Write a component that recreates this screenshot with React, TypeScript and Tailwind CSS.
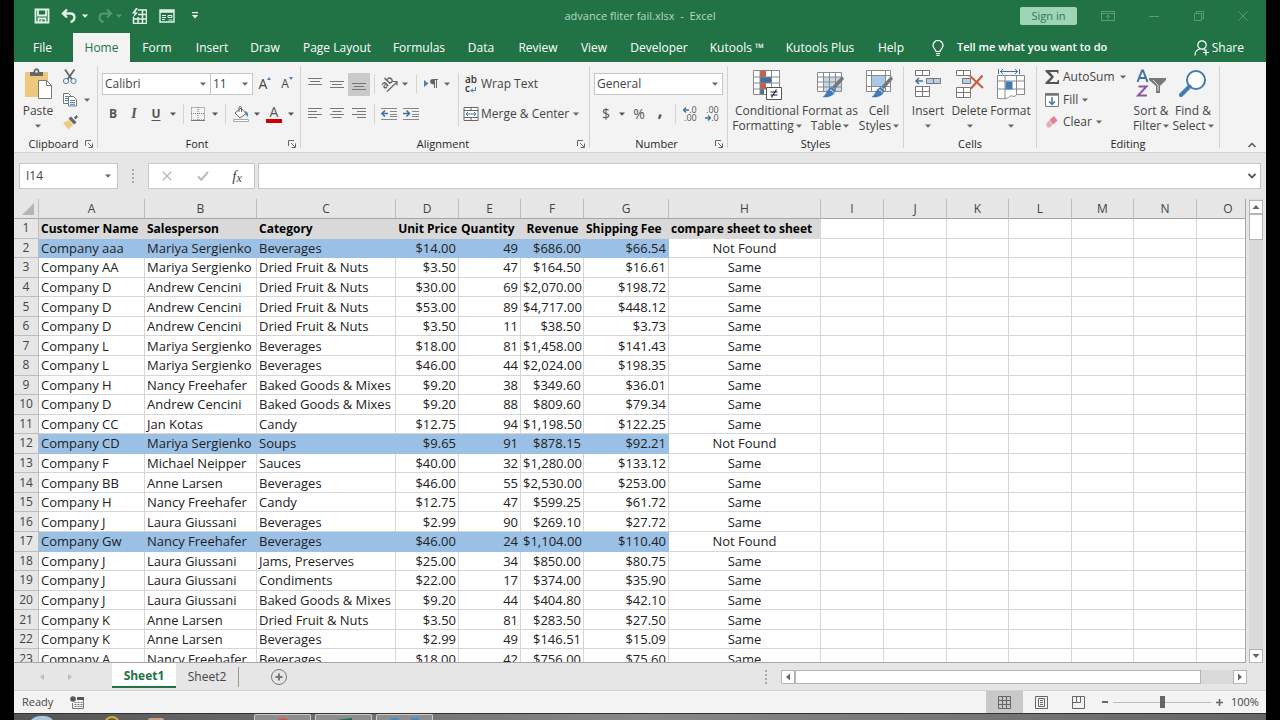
import React from 'react';
import { clsx } from 'clsx';

type RowData = [string, string, string, string, string, string, string, string];

const columns = [
  { id: 'A', width: 'w-[106px]' },
  { id: 'B', width: 'w-[112px]' },
  { id: 'C', width: 'w-[139px]' },
  { id: 'D', width: 'w-[63px]' },
  { id: 'E', width: 'w-[62px]' },
  { id: 'F', width: 'w-[63px]' },
  { id: 'G', width: 'w-[85px]' },
  { id: 'H', width: 'w-[152px]' },
  { id: 'I', width: 'w-[63px]' },
  { id: 'J', width: 'w-[63px]' },
  { id: 'K', width: 'w-[62px]' },
  { id: 'L', width: 'w-[63px]' },
  { id: 'M', width: 'w-[62px]' },
  { id: 'N', width: 'w-[63px]' },
  { id: 'O', width: 'w-[63px]' },
];

const headings = [
  { text: 'Customer Name', align: 'text-left' },
  { text: 'Salesperson', align: 'text-left' },
  { text: 'Category', align: 'text-left' },
  { text: 'Unit Price', align: 'text-right' },
  { text: 'Quantity', align: 'text-left' },
  { text: 'Revenue', align: 'text-center' },
  { text: 'Shipping Fee', align: 'text-left' },
  { text: 'compare sheet to sheet', align: 'text-left' },
];

const rows: RowData[] = [
  ['Company aaa', 'Mariya Sergienko', 'Beverages', '$14.00', '49', '$686.00', '$66.54', 'Not Found'],
  ['Company AA', 'Mariya Sergienko', 'Dried Fruit & Nuts', '$3.50', '47', '$164.50', '$16.61', 'Same'],
  ['Company D', 'Andrew Cencini', 'Dried Fruit & Nuts', '$30.00', '69', '$2,070.00', '$198.72', 'Same'],
  ['Company D', 'Andrew Cencini', 'Dried Fruit & Nuts', '$53.00', '89', '$4,717.00', '$448.12', 'Same'],
  ['Company D', 'Andrew Cencini', 'Dried Fruit & Nuts', '$3.50', '11', '$38.50', '$3.73', 'Same'],
  ['Company L', 'Mariya Sergienko', 'Beverages', '$18.00', '81', '$1,458.00', '$141.43', 'Same'],
  ['Company L', 'Mariya Sergienko', 'Beverages', '$46.00', '44', '$2,024.00', '$198.35', 'Same'],
  ['Company H', 'Nancy Freehafer', 'Baked Goods & Mixes', '$9.20', '38', '$349.60', '$36.01', 'Same'],
  ['Company D', 'Andrew Cencini', 'Baked Goods & Mixes', '$9.20', '88', '$809.60', '$79.34', 'Same'],
  ['Company CC', 'Jan Kotas', 'Candy', '$12.75', '94', '$1,198.50', '$122.25', 'Same'],
  ['Company CD', 'Mariya Sergienko', 'Soups', '$9.65', '91', '$878.15', '$92.21', 'Not Found'],
  ['Company F', 'Michael Neipper', 'Sauces', '$40.00', '32', '$1,280.00', '$133.12', 'Same'],
  ['Company BB', 'Anne Larsen', 'Beverages', '$46.00', '55', '$2,530.00', '$253.00', 'Same'],
  ['Company H', 'Nancy Freehafer', 'Candy', '$12.75', '47', '$599.25', '$61.72', 'Same'],
  ['Company J', 'Laura Giussani', 'Beverages', '$2.99', '90', '$269.10', '$27.72', 'Same'],
  ['Company Gw', 'Nancy Freehafer', 'Beverages', '$46.00', '24', '$1,104.00', '$110.40', 'Not Found'],
  ['Company J', 'Laura Giussani', 'Jams, Preserves', '$25.00', '34', '$850.00', '$80.75', 'Same'],
  ['Company J', 'Laura Giussani', 'Condiments', '$22.00', '17', '$374.00', '$35.90', 'Same'],
  ['Company J', 'Laura Giussani', 'Baked Goods & Mixes', '$9.20', '44', '$404.80', '$42.10', 'Same'],
  ['Company K', 'Anne Larsen', 'Dried Fruit & Nuts', '$3.50', '81', '$283.50', '$27.50', 'Same'],
  ['Company K', 'Anne Larsen', 'Beverages', '$2.99', '49', '$146.51', '$15.09', 'Same'],
  ['Company A', 'Nancy Freehafer', 'Beverages', '$18.00', '42', '$756.00', '$75.60', 'Same'],
];

const menuTabs = [
  { name: 'Form', width: 'w-[54px]' },
  { name: 'Insert', width: 'w-[56px]' },
  { name: 'Draw', width: 'w-[50px]' },
  { name: 'Page Layout', width: 'w-[94px]' },
  { name: 'Formulas', width: 'w-[70px]' },
  { name: 'Data', width: 'w-[54px]' },
  { name: 'Review', width: 'w-[60px]' },
  { name: 'View', width: 'w-[52px]' },
  { name: 'Developer', width: 'w-[78px]' },
  { name: 'Kutools ™', width: 'w-[78px]' },
  { name: 'Kutools Plus', width: 'w-[88px]' },
  { name: 'Help', width: 'w-[54px]' },
];

const Arrow: React.FC<{ className?: string }> = ({ className }) => (
  <svg viewBox="0 0 6 4" className={clsx('h-1 w-1.5 shrink-0 fill-current', className)} aria-hidden="true">
    <path d="M0 0.5h6L3 3.7z" />
  </svg>
);

const Sep: React.FC<{ className?: string }> = ({ className }) => (
  <span className={clsx('flex shrink-0 justify-center', className)}>
    <span className="h-5 w-px bg-[#d4d4d4]" />
  </span>
);

interface ToolProps {
  label: string;
  className?: string;
  children: React.ReactNode;
}

const Tool: React.FC<ToolProps> = ({ label, className, children }) => (
  <button type="button" aria-label={label} className={clsx('flex shrink-0 items-center justify-center', className)}>
    {children}
  </button>
);

interface GroupProps {
  name: string;
  width: string;
  launcher?: boolean;
  children: React.ReactNode;
}

const Group: React.FC<GroupProps> = ({ name, width, launcher, children }) => (
  <section aria-label={name} className={clsx('flex shrink-0 pt-1', width)}>
    <div className="flex min-w-0 flex-1 flex-col">
      <div className="flex-1">{children}</div>
      <div className="flex h-4 items-center">
        <span className={clsx('flex-1 text-center text-[11px] leading-4 text-[#262626]', launcher && 'pl-2')}>{name}</span>
        {launcher && (
          <Tool label={`${name} settings`} className="mr-1 w-2">
            <svg viewBox="0 0 8 8" className="size-2 fill-none stroke-[#666]">
              <path d="M0.5 6V0.5H6M3 3l4 4M7.5 3.5v4h-4" />
            </svg>
          </Tool>
        )}
      </div>
    </div>
    <span className="mb-1 w-px bg-[#d2d2d2]" />
  </section>
);

const BigTool: React.FC<{ lines: string[]; width: string; children: React.ReactNode }> = ({ lines, width, children }) => (
  <button type="button" className={clsx('flex shrink-0 flex-col items-center text-xs leading-[15px] text-[#444]', width)}>
    <span className="mb-[3px] flex h-8 items-center justify-center">{children}</span>
    <span className="whitespace-nowrap">{lines[0]}</span>
    <span className="flex h-[15px] items-center gap-0.5 whitespace-nowrap">
      {lines[1]}
      <Arrow className="text-[#666]" />
    </span>
  </button>
);

const Lines: React.FC<{ d: string }> = ({ d }) => (
  <svg viewBox="0 0 14 14" className="size-3.5 fill-none stroke-[#777]">
    <path d={d} />
  </svg>
);

const TitleBar = () => (
  <header className="grid h-8 shrink-0 grid-cols-[1fr_auto_1fr] items-center text-white">
    <div className="flex items-center pl-3.5">
      <Tool label="Save" className="w-7">
        <svg viewBox="0 0 16 16" className="size-4 fill-none stroke-[#e4f2ea]" strokeWidth="1.800">
          <path d="M1.500 1.500h13v13h-13z" />
          <path d="M4 2v5.500h8V2M4.500 14.500v-4h7v4M7.500 12v2.500" />
        </svg>
      </Tool>
      <Tool label="Undo" className="w-[26px]">
        <svg viewBox="0 0 16 16" className="size-4 fill-none stroke-[#e4f2ea]" strokeWidth="2.400">
          <path d="M6 1.500L2 5.500l4 4M2.500 5.500H9.500c5 0 5.500 7 0 8.500" />
        </svg>
      </Tool>
      <Arrow />
      <Tool label="Redo" className="ml-1.5 w-[22px] opacity-25">
        <svg viewBox="0 0 16 16" className="size-4 fill-none stroke-white" strokeWidth="2">
          <path d="M10 1.500l4 4-4 4M13.500 5.500H6.500c-5 0-5.500 7 0 8.500" />
        </svg>
      </Tool>
      <Arrow className="opacity-25" />
      <Tool label="Quick table" className="w-[34px]">
        <svg viewBox="0 0 16 16" className="size-4 fill-none stroke-[#e4f2ea]">
          <path d="M7 2h8.500v13.500h-13V9M7 6.500h8.500M2.500 11h13M7 9v6.500M11.500 2v13.500" strokeWidth="1.500" />
          <path d="M5 0L1 5.500h3L1.500 10 7 4.500H4L7 0z" className="fill-white stroke-none" />
        </svg>
      </Tool>
      <Tool label="Form" className="w-[22px]">
        <svg viewBox="0 0 16 16" className="size-4 fill-none stroke-[#e4f2ea]">
          <path d="M1 2h14v12H1z" strokeWidth="1.400" />
          <path d="M1 3.500h14" strokeWidth="2.500" />
          <path d="M3 7.500h4M3 9.500h4M3 11.500h3M9 7.500h4v2H9zM9.500 12h4" />
        </svg>
      </Tool>
      <Tool label="Customize toolbar" className="w-[34px]">
        <svg viewBox="0 0 6 8" className="h-2 w-1.5 fill-white">
          <path d="M0 0h6v1.200H0zM0 3h6L3 6.500z" />
        </svg>
      </Tool>
    </div>
    <h1 className="text-[11px] text-[#b9d6c6]">advance fliter fail.xlsx&nbsp; -&nbsp; Excel</h1>
    <div className="flex items-center justify-end pr-px text-[#5d9b78]">
      <button type="button" className="mr-2 h-[18px] w-[57px] rounded-xs bg-[#9fd5b7] text-[11px] leading-4 text-[#2b7a50]">
        Sign in
      </button>
      <Tool label="Ribbon options" className="w-[46px]">
        <svg viewBox="0 0 14 12" className="h-3 w-3.5 fill-none stroke-current">
          <path d="M0.500 1.500h13v9H0.500zM0.500 3.500h13M7 9.500v-4M5 7l2-2 2 2" />
        </svg>
      </Tool>
      <Tool label="Minimize" className="w-[46px]">
        <span className="h-px w-2.5 bg-current" />
      </Tool>
      <Tool label="Restore" className="w-11">
        <svg viewBox="0 0 10 10" className="size-2.5 fill-none stroke-current">
          <path d="M0.500 2.500h7v7h-7zM2.500 2.500v-2h7v7h-2" />
        </svg>
      </Tool>
      <Tool label="Close" className="w-11">
        <svg viewBox="0 0 10 10" className="size-2.5 fill-none stroke-current">
          <path d="M0.500 0.500l9 9M9.500 0.500l-9 9" />
        </svg>
      </Tool>
    </div>
  </header>
);

const MenuBar = () => (
  <nav className="flex h-[30px] shrink-0 items-stretch pt-px text-xs whitespace-nowrap text-white">
    <button type="button" className="w-[57px]">File</button>
    <button type="button" className="ml-0.5 w-[57px] bg-[#f3f3f3] text-[#217346]">Home</button>
    {menuTabs.map((tab) => (
      <button key={tab.name} type="button" className={clsx('shrink-0', tab.width)}>
        {tab.name}
      </button>
    ))}
    <button type="button" className="ml-3.5 flex items-center gap-[13px] text-[11px] font-semibold">
      <svg viewBox="0 0 12 16" className="h-4 w-3 fill-none stroke-white" strokeWidth="1.200">
        <path d="M4 11.500c0-2-3-3-3-6a5 5 0 0 1 10 0c0 3-3 4-3 6zM4 13.500h4M4.500 15.300h3" />
      </svg>
      Tell me what you want to do
    </button>
    <button type="button" className="mr-[22px] ml-auto flex items-center gap-0.5">
      <svg viewBox="0 0 16 16" className="size-4 fill-none stroke-white" strokeWidth="1.200">
        <circle cx="8" cy="5" r="4.200" />
        <path d="M1 15.500c0-4 2-6 5-6.500M9.500 9l2 1.500M12 9.500v6M9 12.500h6" />
      </svg>
      Share
    </button>
  </nav>
);

const ClipboardGroup = () => (
  <Group name="Clipboard" width="w-[84px]" launcher>
    <div className="flex">
      <button type="button" className="ml-1.5 flex w-9 flex-col items-center pt-0.5 text-xs leading-[15px] text-[#444]">
        <svg viewBox="0 0 28 32" className="mb-[3px] h-8 w-7">
          <path d="M1 4h23v25H1z" fill="#edc87e" />
          <path d="M6 4h3.500c0-5 6-5 6 0H19v4H6z" fill="#666" />
          <circle cx="12.500" cy="3.500" r="1.200" fill="#f3f3f3" />
          <path d="M14.500 12.500h8l5 5v13h-13z" fill="#fff" stroke="#777" />
          <path d="M22.500 12.500v5h5" fill="none" stroke="#777" />
        </svg>
        Paste
        <Arrow className="mt-1.5 text-[#666]" />
      </button>
      <div className="ml-1 flex flex-col">
        <Tool label="Cut" className="h-[22px] w-5">
          <svg viewBox="0 0 16 16" className="size-4 fill-none">
            <path d="M3 0.500l7 10M12.500 0.500l-7 10" stroke="#666" strokeWidth="1.800" />
            <circle cx="4" cy="12" r="2.600" stroke="#4f7fb0" />
            <circle cx="11.500" cy="12" r="2.600" stroke="#4f7fb0" />
          </svg>
        </Tool>
        <div className="flex items-center">
          <Tool label="Copy" className="h-[23px] w-5">
            <svg viewBox="0 0 16 16" className="size-4 fill-white stroke-[#777]">
              <path d="M1.500 1.500h5l3 3v7h-8z" />
              <path d="M3 4.500h3M3 6.500h3M3 8.500h3" stroke="#4f7fb0" />
              <path d="M6.500 4.500h5l3 3v6.500h-8z" />
              <path d="M8 8.500h5M8 10.500h5M8 12.300h5" stroke="#4f7fb0" />
            </svg>
          </Tool>
          <Arrow className="ml-1 text-[#666]" />
        </div>
        <Tool label="Format painter" className="h-[21px] w-5">
          <svg viewBox="0 0 16 16" className="size-4">
            <path d="M1 9l6-3 4 5-4.500 4.500z" fill="#edc87e" />
            <path d="M6.500 4.500L9 2.500l5.500 6L12 10.500zM12 3.500L14.500 1 16 3l-2.500 2.500z" fill="#666" />
          </svg>
        </Tool>
      </div>
    </div>
  </Group>
);

const FontGroup = () => (
  <Group name="Font" width="w-[203px]" launcher>
    <div className="mt-[7px] flex h-[22px] w-[200px] items-center pl-1 text-xs text-[#444]">
      <div className="flex h-[22px] w-[109px] items-center border border-[#c6c6c6] bg-white pr-1">
        <select aria-label="Font" defaultValue="Calibri" className="min-w-0 flex-1 appearance-none pl-0.5">
          <option>Calibri</option>
        </select>
        <Arrow className="pointer-events-none text-[#666]" />
      </div>
      <div className="-ml-px flex h-[22px] w-[43px] items-center border border-[#c6c6c6] bg-white pr-1">
        <select aria-label="Font size" defaultValue="11" className="min-w-0 flex-1 appearance-none pl-0.5">
          <option>11</option>
        </select>
        <Arrow className="pointer-events-none text-[#666]" />
      </div>
      <Tool label="Increase font size" className="w-6 text-sm">
        A
        <svg viewBox="0 0 4 3" className="mb-3 h-[3px] w-1 fill-[#4f7fb0]"><path d="M0 3h4L2 0z" /></svg>
      </Tool>
      <Tool label="Decrease font size" className="w-5 text-xs">
        A
        <svg viewBox="0 0 4 3" className="mb-3 h-[3px] w-1 fill-[#4f7fb0]"><path d="M0 0h4L2 3z" /></svg>
      </Tool>
    </div>
    <div className="mt-2 flex h-[22px] items-center pl-1 text-xs text-[#555]">
      <Tool label="Bold" className="w-[22px] font-bold">B</Tool>
      <Tool label="Italic" className="w-5 font-['Liberation_Serif',serif] text-sm font-bold italic">I</Tool>
      <Tool label="Underline" className="w-6 font-bold underline underline-offset-2">U</Tool>
      <Arrow className="mx-0.5" />
      <Sep className="w-2.5" />
      <Tool label="Borders" className="w-5">
        <svg viewBox="0 0 14 14" className="size-3.5 fill-none stroke-[#777]">
          <path d="M0.500 0.500h13v12.500H0.500zM7 0v13M0 6.500h14" strokeDasharray="1 1" />
          <path d="M0 13.500h14" />
        </svg>
      </Tool>
      <Arrow className="mx-1" />
      <Sep className="w-1.5" />
      <Tool label="Fill color" className="w-[26px]">
        <svg viewBox="0 0 16 16" className="size-4 fill-none stroke-[#666]">
          <path d="M2 7l6-5 5 5.500L7 12z" fill="#fff" />
          <path d="M6 6V1.500c0-1.500 2.500-1.500 2.500 0V6" />
          <path d="M12 5c3 1 3.500 3 2.500 6-1-1-2-3-2.500-6z" fill="#4f7fb0" stroke="none" />
          <path d="M0.500 13.500h15v2H0.500z" fill="#fff" stroke="#aaa" />
        </svg>
      </Tool>
      <Arrow />
      <Tool label="Font color" className="w-7 flex-col">
        <span className="text-sm leading-3">A</span>
        <span className="mt-px h-1 w-4 bg-[#d00000]" />
      </Tool>
      <Arrow />
    </div>
  </Group>
);

const AlignmentGroup = () => (
  <Group name="Alignment" width="w-[289px]" launcher>
    <div className="flex pt-[7px]">
      <div className="flex flex-col gap-2 pl-[3px] text-[#666]">
        <div className="flex h-[22px] items-center">
          <Tool label="Top align" className="h-[22px] w-[22px]"><Lines d="M0 1.500h14M2 4.500h10M0 7.500h14" /></Tool>
          <Tool label="Middle align" className="h-[22px] w-[22px]"><Lines d="M0 4.500h14M2 7.500h10M0 10.500h14" /></Tool>
          <Tool label="Bottom align" className="h-[23px] w-[22px] bg-[#cacaca]"><Lines d="M0 6.500h14M2 9.500h10M0 12.500h14" /></Tool>
          <Sep className="w-2" />
          <Tool label="Orientation" className="w-[22px]">
            <span className="-mr-2 mb-1 -rotate-45 text-[11px] leading-[14px] font-semibold text-[#555]">ab</span>
            <svg viewBox="0 0 12 12" className="mt-1 size-3 fill-none stroke-[#666]" strokeWidth="1.200">
              <path d="M1 11.500L11 2M7 1.500h4v4" />
            </svg>
          </Tool>
          <Arrow className="mx-0.5" />
          <Sep className="w-3" />
          <Tool label="Text direction" className="w-[18px]">
            <svg viewBox="0 0 14 12" className="h-3 w-3.5 fill-[#666]">
              <path d="M0 2l4.500 3.500L0 9z" fill="#4f7fb0" />
              <path d="M9 1h5v1h-1v8h-1V2h-1v8h-1V6.500C5 6.500 5 1 9 1z" />
            </svg>
          </Tool>
          <Arrow className="mx-1" />
        </div>
        <div className="flex h-[22px] items-center">
          <Tool label="Align left" className="w-[22px]"><Lines d="M0 1.500h14M0 4.500h9M0 7.500h14M0 10.500h9" /></Tool>
          <Tool label="Center" className="w-[22px]"><Lines d="M0 1.500h14M2.500 4.500h9M0 7.500h14M2.500 10.500h9" /></Tool>
          <Tool label="Align right" className="w-[22px]"><Lines d="M0 1.500h14M5 4.500h9M0 7.500h14M5 10.500h9" /></Tool>
          <Sep className="w-2" />
          <Tool label="Decrease indent" className="w-[22px]">
            <svg viewBox="0 0 16 14" className="h-3.5 w-4 fill-none stroke-[#888]">
              <path d="M0 1.500h16M9 4.500h7M9 7.500h7M9 9.500h7M0 12.500h16" />
              <path d="M1 6.500h6M4 3.500l-3 3 3 3" stroke="#3f74a8" strokeWidth="1.600" />
            </svg>
          </Tool>
          <Tool label="Increase indent" className="w-[22px]">
            <svg viewBox="0 0 16 14" className="h-3.5 w-4 fill-none stroke-[#888]">
              <path d="M0 1.500h16M9 4.500h7M9 7.500h7M9 9.500h7M0 12.500h16" />
              <path d="M0 6.500h6M3.500 3.500l3 3-3 3" stroke="#3f74a8" strokeWidth="1.600" />
            </svg>
          </Tool>
        </div>
      </div>
      <span className="mx-1 h-[53px] w-px bg-[#d4d4d4]" />
      <div className="flex flex-col gap-2 text-xs text-[#444]">
        <button type="button" className="flex h-[22px] items-center gap-0.5">
          <span className="flex w-4 flex-col pl-0.5 text-left text-[10px] leading-[9px] font-semibold text-[#333]">
            <span>ab</span>
            <span className="flex items-end">
              c
              <svg viewBox="0 0 6 6" className="size-1.5 fill-none stroke-[#3f74a8]">
                <path d="M5.500 0v3.500H1M3 1.500l-2 2 2 2" />
              </svg>
            </span>
          </span>
          Wrap Text
        </button>
        <button type="button" className="flex h-[22px] items-center gap-0.5 whitespace-nowrap">
          <svg viewBox="0 0 16 16" className="size-4 fill-white stroke-[#666]">
            <path d="M1 1.500h14v13H1zM1 4.500h14M1 11.500h14M8 1.500v3M8 11.500v3" />
            <path d="M3 8h10M5 6L3 8l2 2M11 6l2 2-2 2" stroke="#3f74a8" fill="none" />
          </svg>
          Merge &amp; Center
          <Arrow className="ml-0.5 text-[#666]" />
        </button>
      </div>
    </div>
  </Group>
);

const DecimalIcon: React.FC<{ top: string; bottom: string; left?: boolean }> = ({ top, bottom, left }) => {
  const arrow = (
    <svg viewBox="0 0 6 6" className="size-1.5 fill-none stroke-[#3f74a8]" strokeWidth="1.400">
      <path d={left ? 'M0.500 3H6M3 0.500L0.500 3 3 5.500' : 'M0 3h5.500M3 0.500L5.500 3 3 5.500'} />
    </svg>
  );
  return (
    <span className="flex flex-col items-end text-[9px] leading-2 text-[#555]">
      <span className="flex h-2 items-center">{left && arrow}{top}</span>
      <span className="flex h-2 items-center">{!left && arrow}{bottom}</span>
    </span>
  );
};

const NumberGroup = () => (
  <Group name="Number" width="w-[138px]" launcher>
    <div className="mt-[7px] ml-1 flex h-[22px] w-[129px] items-center border border-[#c6c6c6] bg-white pr-1 text-xs text-[#444]">
      <select aria-label="Number format" defaultValue="General" className="min-w-0 flex-1 appearance-none pl-0.5">
        <option>General</option>
      </select>
      <Arrow className="pointer-events-none text-[#666]" />
    </div>
    <div className="mt-2 flex h-[22px] items-center pl-1.5 text-sm text-[#555]">
      <Tool label="Accounting format" className="w-5">$</Tool>
      <Arrow className="mx-[3px]" />
      <Tool label="Percent style" className="w-[22px]">%</Tool>
      <Tool label="Comma style" className="h-[22px] w-5 pb-2 text-lg font-bold">,</Tool>
      <Sep className="w-2.5" />
      <Tool label="Increase decimal" className="w-5"><DecimalIcon top=".0" bottom=".00" left /></Tool>
      <Tool label="Decrease decimal" className="w-6"><DecimalIcon top=".00" bottom=".0" /></Tool>
    </div>
  </Group>
);

const Brush = () => (
  <>
    <path d="M28 8l2 3-9 10-3-2z" fill="#777" />
    <path d="M17.500 19l4 3c-1 6-7 8-13 7 4-2 4-8 9-10z" fill="#3f7cb3" />
    <path d="M16 22c2 0 3 1 3 2.500" fill="none" stroke="#fff" />
  </>
);

const StylesGroup = () => (
  <Group name="Styles" width="w-[176px]">
    <div className="flex pt-0.5 pl-1">
      <BigTool lines={['Conditional', 'Formatting']} width="w-[70px]">
        <svg viewBox="0 0 32 32" className="size-8 fill-none">
          <path d="M2.500 2.500h26v24h-26z" fill="#fff" />
          <path d="M9 3h6v6H9zM9 15h6v6H9z" fill="#cc5b45" />
          <path d="M9 9h11v6H9zM9 21h4v6H9z" fill="#44709f" />
          <path d="M2.500 2.500h26v24h-26zM2.500 9h26M2.500 15h26M2.500 21h26M9 2.500v24M20.500 2.500v24" stroke="#888" />
          <path d="M15.500 19.500h15v12h-15z" fill="#fff" stroke="#555" />
          <path d="M19.500 24h7M19.500 27h7M25.500 21.500l-5 8" stroke="#222" strokeWidth="1.200" />
        </svg>
      </BigTool>
      <BigTool lines={['Format as', 'Table']} width="w-[56px]">
        <svg viewBox="0 0 32 32" className="size-8 fill-none">
          <path d="M3.500 4.500h24v19h-24z" fill="#fff" />
          <path d="M10 9h17v14H10z" fill="#c3d8eb" />
          <path d="M3.500 4.500h24v19h-24zM3.500 9h24M3.500 14h24M3.500 19h24M9.500 4.500v19M15.500 4.500v19M21.500 4.500v19" stroke="#8a8a8a" />
          <Brush />
        </svg>
      </BigTool>
      <BigTool lines={['Cell', 'Styles']} width="w-[42px]">
        <svg viewBox="0 0 32 32" className="size-8 fill-none">
          <path d="M3.500 2.500h24v21h-24z" fill="#fff" />
          <path d="M9 8h14v10H9z" fill="#a9c9e6" />
          <path d="M3.500 2.500h24v21h-24zM3.500 7.500h24M3.500 18.500h24M8.500 2.500v21M22.500 2.500v21" stroke="#8a8a8a" />
          <Brush />
        </svg>
      </BigTool>
    </div>
  </Group>
);

const CellsGroup = () => (
  <Group name="Cells" width="w-[133px]">
    <div className="flex pt-0.5 pl-[3px]">
      <BigTool lines={['Insert', '']} width="w-[42px]">
        <svg viewBox="0 0 28 32" className="h-8 w-7 fill-white stroke-[#777]">
          <path d="M1.500 2.500h14v5h-14zM8.500 2.500v5M1.500 18.500h14v10h-14zM1.500 23.500h14M8.500 18.500v10" />
          <path d="M12.500 10.500h14v5h-14zM19.500 10.500v5" fill="#b7d0e8" />
          <path d="M2 13h7M5 10l-3 3 3 3" fill="none" stroke="#3f74a8" strokeWidth="1.500" />
        </svg>
      </BigTool>
      <BigTool lines={['Delete', '']} width="w-[41px]">
        <svg viewBox="0 0 28 32" className="h-8 w-7 fill-white stroke-[#777]">
          <path d="M0.500 2.500h14v5h-14zM7.500 2.500v5M0.500 19.500h14v10h-14zM0.500 24.500h14M7.500 19.500v10" />
          <path d="M6.500 10.500h8v5h-8z" fill="#b7d0e8" />
          <path d="M14 8l13 12M26.500 7.500L15 20.500" stroke="#d0553a" strokeWidth="2" />
        </svg>
      </BigTool>
      <BigTool lines={['Format', '']} width="w-[41px]">
        <svg viewBox="0 0 28 32" className="h-8 w-7 fill-none stroke-[#888]">
          <path d="M0.500 7.500h27v19h-8c-2 4-5 0-7 2-2 3-8 2-12 2zM0.500 13h27M0.500 21h27M8 7.500v23M19.500 7.500v19" fill="#fff" />
          <path d="M8.500 13.500h7v8h-7z" fill="#3f7cb3" stroke="none" />
          <path d="M1.500 1v5M22.500 1v5M3 3.500h18M6 1L3.500 3.500 6 6M18 1l2.500 2.500L18 6" stroke="#3f74a8" />
        </svg>
      </BigTool>
    </div>
  </Group>
);

const EditingGroup = () => (
  <Group name="Editing" width="w-[183px]">
    <div className="flex pl-2">
      <div className="flex w-[85px] flex-col pr-1 text-xs text-[#444]">
        <button type="button" className="flex h-[22px] items-center gap-1">
          <svg viewBox="0 0 14 14" className="size-3.5 fill-[#555]">
            <path d="M0.500 0h13v3.500h-1L12 2H5l4 5-4.500 5H12l1-2h1v4H0.500v-1.500L6 7 0.500 1.500z" />
          </svg>
          AutoSum
          <Arrow className="ml-auto text-[#666]" />
        </button>
        <button type="button" className="flex h-[23px] items-center gap-1">
          <svg viewBox="0 0 14 14" className="size-3.5 fill-white stroke-[#777]">
            <path d="M0.500 0.500h13v13H0.500z" />
            <path d="M1 1.500h12" strokeWidth="2.500" />
            <path d="M7 4v7.500M4 8.500l3 3 3-3" stroke="#3f74a8" strokeWidth="1.500" fill="none" />
          </svg>
          Fill
          <Arrow className="text-[#666]" />
        </button>
        <button type="button" className="flex h-[22px] items-center gap-1">
          <svg viewBox="0 0 14 14" className="size-3.5">
            <path d="M9 1l3.500 4.500L8 9.500 4.500 5z" fill="#e07f92" />
            <path d="M4 5.500L7.500 10 5 12.500H2.500L1 9z" fill="#e9a9b5" />
          </svg>
          Clear
          <Arrow className="text-[#666]" />
        </button>
      </div>
      <div className="flex pt-0.5">
        <BigTool lines={['Sort &', 'Filter']} width="w-[42px]">
          <svg viewBox="0 0 30 32" className="h-8 w-[30px]">
            <path d="M1.500 14L6 2.500h1L11.500 14M3 10h7" fill="none" stroke="#3f74a8" strokeWidth="2" />
            <path d="M2.500 18.500h8L2 27.500h9" fill="none" stroke="#8a58a8" strokeWidth="2" />
            <path d="M13 10h17v2l-6 6v7h-4v-7l-7-6z" fill="#777" />
            <path d="M17 12l5 5v6" fill="none" stroke="#ddd" />
          </svg>
        </BigTool>
        <BigTool lines={['Find &', 'Select']} width="w-[42px]">
          <svg viewBox="0 0 28 32" className="h-8 w-7">
            <circle cx="17" cy="12" r="9" fill="#fff" stroke="#3f7cb3" strokeWidth="2" />
            <path d="M10.500 18.500L2 27" stroke="#3f7cb3" strokeWidth="4" strokeLinecap="round" />
          </svg>
        </BigTool>
      </div>
    </div>
  </Group>
);

const Ribbon = () => (
  <div className="flex h-[91px] shrink-0 overflow-hidden border-b border-[#d2d2d2] bg-[#f3f3f3]">
    <ClipboardGroup />
    <FontGroup />
    <AlignmentGroup />
    <NumberGroup />
    <StylesGroup />
    <CellsGroup />
    <EditingGroup />
    <Tool label="Collapse ribbon" className="mr-2.5 mb-1 ml-auto self-end">
      <svg viewBox="0 0 8 6" className="h-1.5 w-2 fill-none stroke-[#555]" strokeWidth="1.500">
        <path d="M0.500 5L4 1.500 7.500 5" />
      </svg>
    </Tool>
  </div>
);

const Dots = () => <span className="h-3.5 border-l-2 border-dotted border-[#aaa]" />;

const FormulaBar = () => (
  <div className="flex h-[46px] shrink-0 items-center px-[5px] text-[#444]">
    <div className="flex h-[26px] w-[99px] items-center border border-[#c6c6c6] bg-white pr-1.5">
      <input aria-label="Name box" defaultValue="I14" className="min-w-0 flex-1 pl-1.5 text-xs outline-none" />
      <Arrow className="text-[#666]" />
    </div>
    <div className="flex w-[30px] justify-center"><Dots /></div>
    <div className="flex h-[26px] w-[107px] items-center border border-[#c6c6c6] bg-white">
      <Tool label="Cancel" className="w-9">
        <svg viewBox="0 0 12 12" className="size-2.5 fill-none stroke-[#bbb]" strokeWidth="1.800"><path d="M1 1l10 10M11 1L1 11" /></svg>
      </Tool>
      <Tool label="Enter" className="w-[35px]">
        <svg viewBox="0 0 14 12" className="h-2.5 w-3 fill-none stroke-[#bbb]" strokeWidth="2.500"><path d="M1 6.500L5 10.500 13 1" /></svg>
      </Tool>
      <Tool label="Insert function" className="w-[34px] font-['Liberation_Serif',serif] text-[15px] leading-4 italic">
        f<span className="pt-1 text-xs leading-3">x</span>
      </Tool>
    </div>
    <div className="ml-[3px] flex h-[26px] flex-1 items-center border border-[#c6c6c6] bg-white pr-1">
      <input aria-label="Formula bar" className="min-w-0 flex-1 px-1 text-xs outline-none" />
      <svg viewBox="0 0 8 6" className="h-1.5 w-2 fill-none stroke-[#555]" strokeWidth="1.800"><path d="M0.500 1L4 4.500 7.500 1" /></svg>
    </div>
  </div>
);

const Sheet = () => (
  <table className="h-[470px] w-full min-w-[1245px] table-fixed border-separate border-spacing-0 bg-white text-[13px] leading-[18px] whitespace-nowrap text-[#222]">
    <thead>
      <tr className="h-5 bg-[#e6e6e6] text-xs leading-4 text-[#444]">
        <th className="w-[25px] border-r border-b border-r-[#bdbdbd] border-b-[#a6a6a6] p-0">
          <svg viewBox="0 0 12 12" className="mr-1 ml-auto size-3 fill-[#b5b5b5]"><path d="M12 0v12H0z" /></svg>
        </th>
        {columns.map((col) => (
          <th key={col.id} scope="col" className={clsx('border-r border-b border-r-[#bdbdbd] border-b-[#a6a6a6] p-0 font-normal', col.width)}>
            {col.id}
          </th>
        ))}
      </tr>
    </thead>
    <tbody>
      <tr>
        <RowNumber n={1} />
        {headings.map((h) => (
          <th key={h.text} scope="col" className={clsx('bg-[#d9d9d9] px-0.5 py-0 text-xs leading-[18px] font-bold text-black', h.align)}>
            {h.text}
          </th>
        ))}
        <EmptyCells />
      </tr>
      {rows.map((row, i) => {
        const marked = row[7] === 'Not Found';
        return (
          <tr key={i}>
            <RowNumber n={i + 2} />
            {row.map((value, c) => (
              <td
                key={c}
                className={clsx(
                  'px-0.5 py-0',
                  c < 7 && marked ? 'border-r border-b border-[#9bc0e6] bg-[#9bc0e6]' : 'border-r border-b border-[#d6d6d6]',
                  c > 2 && c < 7 && 'text-right',
                  c === 7 && 'text-center',
                )}
              >
                {value}
              </td>
            ))}
            <EmptyCells />
          </tr>
        );
      })}
    </tbody>
  </table>
);

const RowNumber: React.FC<{ n: number }> = ({ n }) => (
  <th scope="row" className="border-r border-b border-[#bdbdbd] bg-[#e6e6e6] p-0 text-xs leading-[18px] font-normal text-[#444]">
    {n}
  </th>
);

const EmptyCells = () => (
  <>
    {columns.slice(8).map((col) => (
      <td key={col.id} className="border-r border-b border-[#d6d6d6] p-0" />
    ))}
  </>
);

const ScrollButton: React.FC<{ label: string; d: string }> = ({ label, d }) => (
  <button type="button" aria-label={label} className="flex size-3.5 shrink-0 items-center justify-center border border-[#b5b5b5] bg-white">
    <svg viewBox="0 0 8 8" className="size-2 fill-[#666]"><path d={d} /></svg>
  </button>
);

const Workbook = () => (
  <main className="flex min-h-0 flex-1">
    <div className="min-w-0 flex-1 overflow-hidden border-r border-b border-[#a6a6a6]">
      <Sheet />
    </div>
    <div className="mr-[3px] ml-[3px] flex flex-col bg-[#dadada] pt-px">
      <ScrollButton label="Scroll up" d="M0.500 6L4 2l3.500 4z" />
      <div className="h-[26px] w-3.5 border border-[#b5b5b5] bg-white" />
      <div className="flex-1" />
      <ScrollButton label="Scroll down" d="M0.500 2L4 6l3.500-4z" />
    </div>
  </main>
);

const SheetTabs = () => (
  <div className="flex h-7 shrink-0 items-center border-b border-[#d2d2d2] text-xs text-[#444]">
    <div className="flex h-full w-3/5 items-start">
      <div className="flex h-7 w-[98px] items-center gap-[22px] pl-[25px]">
        <Tool label="Previous sheet" className="w-1.5"><svg viewBox="0 0 4 6" className="h-1.5 w-1 fill-[#bbb]"><path d="M4 0v6L0 3z" /></svg></Tool>
        <Tool label="Next sheet" className="w-1.5"><svg viewBox="0 0 4 6" className="h-1.5 w-1 fill-[#bbb]"><path d="M0 0v6l4-3z" /></svg></Tool>
      </div>
      <button type="button" className="h-[25px] w-16 border-b-2 border-[#217346] bg-white pt-0.5 font-bold text-[#217346]">Sheet1</button>
      <button type="button" className="mt-1 h-5 w-[63px] border-r border-[#999] pb-px">Sheet2</button>
      <Tool label="New sheet" className="ml-8 h-7 w-4">
        <svg viewBox="0 0 16 16" className="size-4 fill-none stroke-[#777]">
          <circle cx="8" cy="8" r="7.500" />
          <path d="M8 4.500v7M4.500 8h7" strokeWidth="2" />
        </svg>
      </Tool>
    </div>
    <Dots />
    <div className="mr-[19px] ml-3.5 flex flex-1 bg-[#dadada]">
      <ScrollButton label="Scroll left" d="M6 0.500L2 4l4 3.500z" />
      <div className="h-3.5 flex-1 border border-[#b5b5b5] bg-white" />
      <div className="w-8" />
      <ScrollButton label="Scroll right" d="M2 0.500L6 4 2 7.500z" />
    </div>
  </div>
);

const StatusBar = () => (
  <footer className="flex h-[22px] shrink-0 items-center bg-[#f3f3f3] pl-2 text-[11px] text-[#444]">
    Ready
    <svg viewBox="0 0 14 13" className="ml-[17px] h-[13px] w-3.5 fill-none stroke-[#777]">
      <circle cx="3" cy="3" r="2.800" fill="#555" stroke="none" />
      <path d="M2.500 7v5.500h11V2" />
      <path d="M7 2.500h7" stroke="#555" strokeWidth="3" />
      <path d="M4.500 6.500h8M4.500 8.500h8M4.500 10.500h8" strokeDasharray="2 1" />
    </svg>
    <div className="ml-auto flex h-full items-center">
      <Tool label="Normal view" className="h-full w-[37px] bg-[#c8c8c8]">
        <svg viewBox="0 0 13 13" className="size-[13px] fill-none stroke-[#666]"><path d="M0.500 0.500h12v12H0.500zM0.500 4.500h12M0.500 8.500h12M4.500 0.500v12M8.500 0.500v12" /></svg>
      </Tool>
      <Tool label="Page layout view" className="w-[37px]">
        <svg viewBox="0 0 13 13" className="size-[13px] fill-none stroke-[#666]"><path d="M0.500 0.500h12v12H0.500zM3.500 2.500h6v8h-6zM5 4.500h3M5 6.500h3M5 8.500h3" /></svg>
      </Tool>
      <Tool label="Page break view" className="w-[37px]">
        <svg viewBox="0 0 13 13" className="size-[13px] fill-none stroke-[#666]"><path d="M0.500 0.500h12v12H0.500zM4.500 0.500v6h4v-6M0.500 6.500h4M8.500 0.500v6" /></svg>
      </Tool>
      <Tool label="Zoom out" className="w-4"><span className="h-0.5 w-1.5 bg-[#666]" /></Tool>
      <input
        type="range"
        aria-label="Zoom"
        defaultValue={50}
        className="h-3 w-[98px] appearance-none bg-[linear-gradient(#bbb,#bbb)] bg-[length:100%_1px] bg-center bg-no-repeat [&::-webkit-slider-thumb]:h-3 [&::-webkit-slider-thumb]:w-[5px] [&::-webkit-slider-thumb]:appearance-none [&::-webkit-slider-thumb]:bg-[#666]"
      />
      <Tool label="Zoom in" className="w-4">
        <svg viewBox="0 0 7 7" className="size-[7px] stroke-[#666]" strokeWidth="1.600"><path d="M3.500 0v7M0 3.500h7" /></svg>
      </Tool>
      <span className="ml-1 w-[35px]">100%</span>
    </div>
  </footer>
);

const TaskButton: React.FC<{ children: React.ReactNode }> = ({ children }) => (
  <span className="flex h-full w-[57px] justify-center overflow-hidden rounded-t-xs border-x border-t border-[#ccc] bg-[#8e8e8e] pt-0.5">
    {children}
  </span>
);

const Taskbar = () => (
  <div className="flex h-[7px] shrink-0 overflow-hidden border-t border-[#333] bg-linear-to-r from-[#555] via-[#888] to-[#666]">
    <span className="mt-0.5 ml-3.5 h-6 w-7 shrink-0 rounded-full bg-[#a9c8e0]" />
    <span className="mt-0.5 ml-12 size-4 shrink-0 rounded-full border-2 border-[#d9a92f]" />
    <span className="mt-1 ml-7 h-3 w-4 shrink-0 rounded-xs bg-[#c9a184]" />
    <div className="ml-[90px] flex gap-1">
      <TaskButton><span className="mt-px size-5 shrink-0 rounded-full bg-[#d9534a]" /></TaskButton>
      <TaskButton>
        <svg viewBox="0 0 16 4" className="mt-px h-1 w-4 fill-[#217346]"><path d="M0 2l16-2v4H0z" /></svg>
      </TaskButton>
      <TaskButton>
        <span className="mt-px mr-3 size-2 bg-[#3f8fd0]" />
        <span className="mt-px size-2 bg-[#3f8fd0]" />
      </TaskButton>
    </div>
  </div>
);

const App: React.FC = () => (
  <div className="h-screen bg-black px-3.5 font-['Open_Sans','Noto_Sans',sans-serif]">
    <div className="flex h-full flex-col overflow-hidden bg-[#e6e6e6]">
      <div className="bg-[#217346]">
        <TitleBar />
        <MenuBar />
      </div>
      <Ribbon />
      <FormulaBar />
      <Workbook />
      <SheetTabs />
      <StatusBar />
      <Taskbar />
    </div>
  </div>
);

export default App;
